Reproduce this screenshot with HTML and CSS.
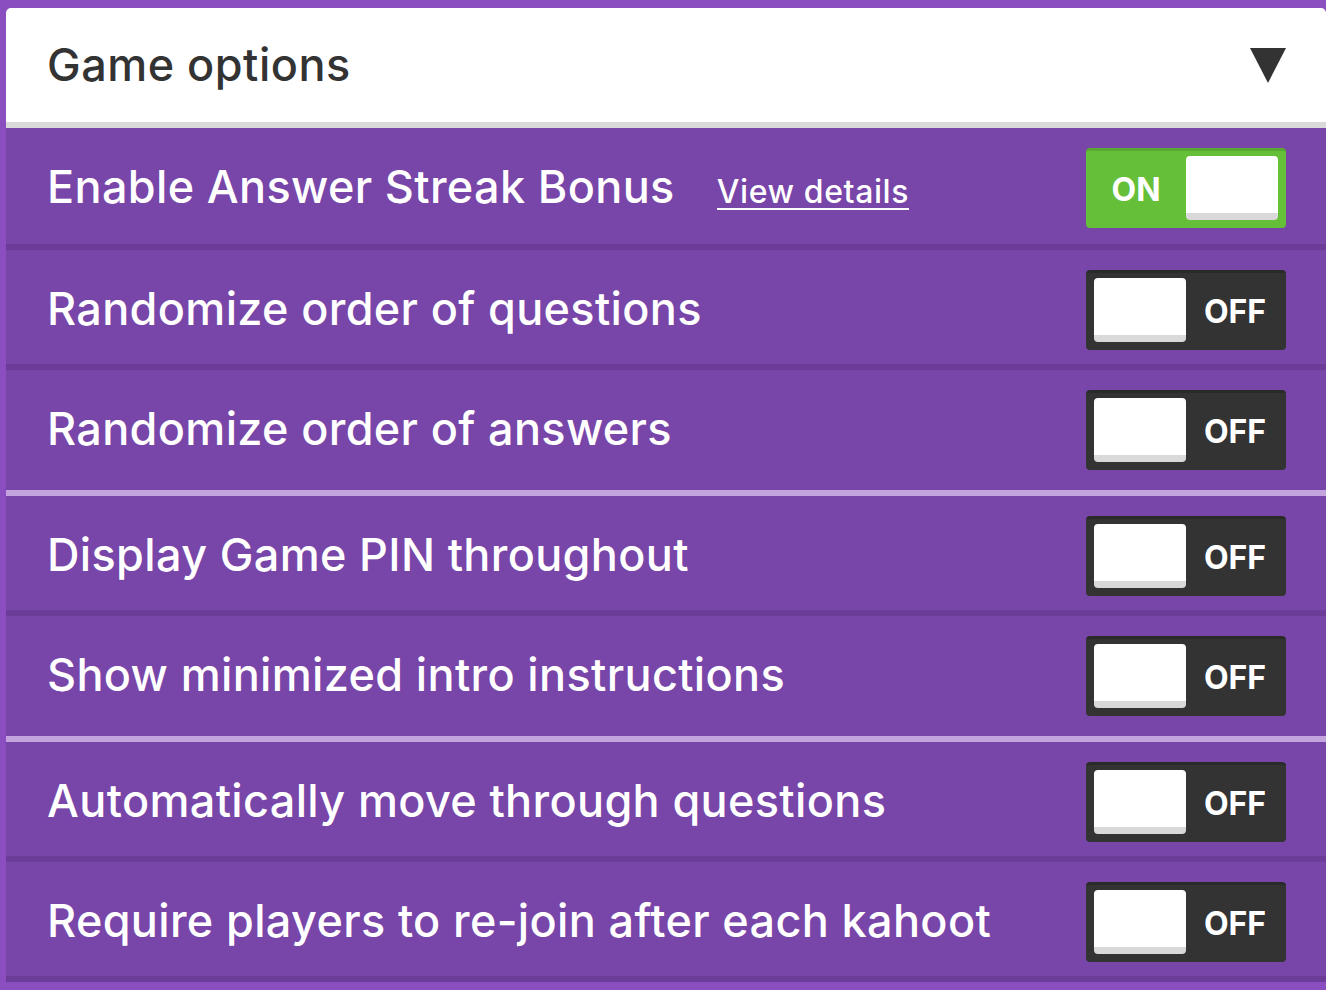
FILE: index.html
```html
<!DOCTYPE html>
<html>
<head>
<meta charset="utf-8">
<link rel="stylesheet" href="styles.css">
</head>
<body>
<div class="panel">
  <div class="header">
    <span class="header-title">Game options</span>
    <svg class="caret" width="36" height="36" viewBox="0 0 36 36"><polygon points="0,0 36,0 18,35" fill="#333"/></svg>
  </div>
  <div class="row first">
    <div class="label">Enable Answer Streak Bonus <a class="details">View details</a></div>
    <div class="toggle on"><span class="state">ON</span><span class="knob"></span></div>
  </div>
  <div class="row">
    <div class="label">Randomize order of questions</div>
    <div class="toggle"><span class="knob"></span><span class="state">OFF</span></div>
  </div>
  <div class="row group-end">
    <div class="label">Randomize order of answers</div>
    <div class="toggle"><span class="knob"></span><span class="state">OFF</span></div>
  </div>
  <div class="row">
    <div class="label">Display Game PIN throughout</div>
    <div class="toggle"><span class="knob"></span><span class="state">OFF</span></div>
  </div>
  <div class="row group-end">
    <div class="label">Show minimized intro instructions</div>
    <div class="toggle"><span class="knob"></span><span class="state">OFF</span></div>
  </div>
  <div class="row">
    <div class="label">Automatically move through questions</div>
    <div class="toggle"><span class="knob"></span><span class="state">OFF</span></div>
  </div>
  <div class="row">
    <div class="label">Require players to re-join after each kahoot</div>
    <div class="toggle"><span class="knob"></span><span class="state">OFF</span></div>
  </div>
</div>
</body>
</html>
```

FILE: styles.css
```css
html, body {
  margin: 0;
  padding: 0;
  background: #8a4ec0;
  height: 990px;
  overflow: hidden;
}
body {
  font-family: "Inter", "DejaVu Sans", sans-serif;
}
.panel {
  margin: 8px 0 0 6px;
  width: 1320px;
}
.header {
  background: #fff;
  border-radius: 5px 5px 0 0;
  border-bottom: 6px solid #d9d9d9;
  height: 114px;
  box-sizing: content-box;
  display: flex;
  align-items: center;
  justify-content: space-between;
  padding: 0 40px 0 41px;
}
.header-title {
  color: #333;
  font-size: 45px;
  font-weight: 500;
  letter-spacing: 0.5px;
  margin-bottom: 2px;
}
.caret {
  display: block;
  margin-top: 1px;
}
.row {
  background: #7845a9;
  display: flex;
  justify-content: space-between;
  align-items: center;
  padding: 20px 40px 14px 41px;
  border-bottom: 6px solid #6b3c98;
}
.row.first {
  padding-bottom: 16px;
}
.row.group-end {
  padding-bottom: 20px;
  border-bottom-color: #c3a4de;
}
.label {
  color: #fff;
  font-size: 45px;
  font-weight: 500;
  letter-spacing: 0.35px;
  display: flex;
  align-items: baseline;
  margin-bottom: 4px;
}
.details {
  font-size: 32px;
  letter-spacing: 0.6px;
  margin-left: 42px;
  border-bottom: 2px solid #fff;
  line-height: 1.05;
}
.toggle {
  width: 200px;
  height: 80px;
  box-sizing: border-box;
  background: #333;
  border-top: 3px solid #2a2a2a;
  border-radius: 4px;
  padding: 5px 8px 8px;
  display: flex;
  align-items: center;
  justify-content: space-between;
}
.toggle.on {
  background: #66bf39;
  border-top-color: #59a82f;
}
.knob {
  width: 92px;
  height: 64px;
  box-sizing: border-box;
  background: #fff;
  border-bottom: 7px solid #d9d9d9;
  border-radius: 4px;
}
.state {
  color: #fff;
  font-weight: 700;
  font-size: 32px;
  flex: 1;
  text-align: center;
  padding: 2px 0 0 6px;
}
.toggle.on .state {
  padding: 2px 8px 0 0;
}
```
